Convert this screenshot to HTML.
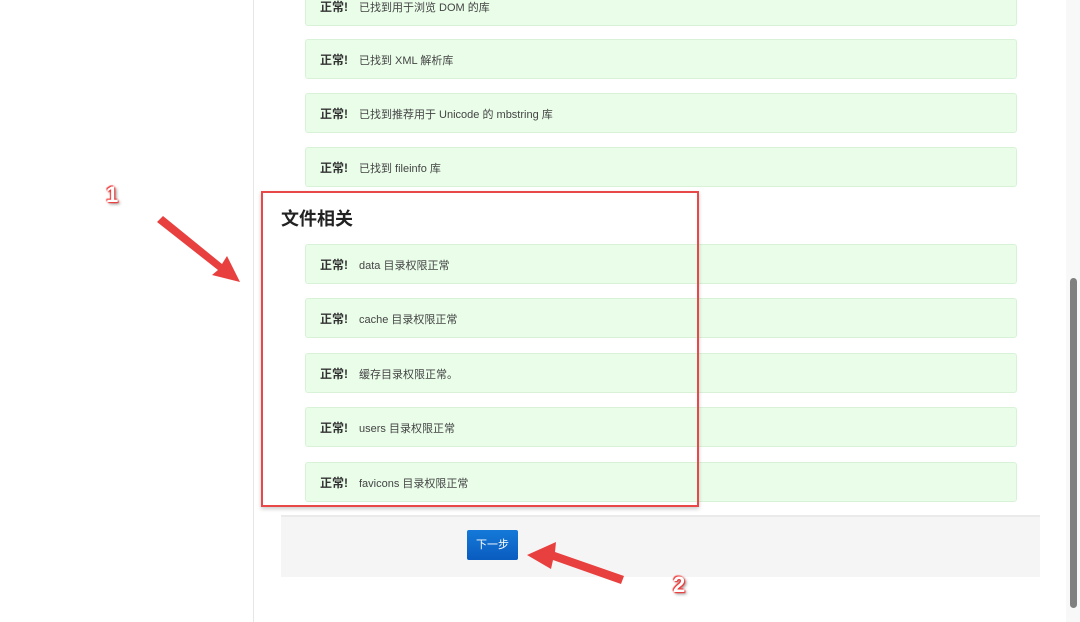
<!DOCTYPE html>
<html><head><meta charset="utf-8"><style>
body{margin:0;width:1080px;height:622px;background:#fff;position:relative;overflow:hidden;font-family:"Liberation Sans","Noto Sans CJK SC",sans-serif;}
.side{position:absolute;left:0;top:0;width:253px;height:622px;border-right:1px solid #e6e6e6;background:#fff}
.a{position:absolute;left:305px;width:712px;height:40px;background:#e9fde9;border:1px solid #d8f2d8;border-radius:3px;font-size:11px;color:#444;line-height:40px;box-sizing:border-box;padding-left:14px}
.a b{color:#333;font-size:12px;margin-right:11px}
h3{position:absolute;left:281px;top:205px;margin:0;font-size:18px;font-weight:bold;color:#222}
.foot{position:absolute;left:281px;top:515px;width:759px;height:60px;background:#f5f5f6;border-top:2px solid #eaeaea}
.btn{position:absolute;left:467px;top:530px;width:51px;height:30px;background:linear-gradient(#1479d8,#0a5cbf);border-radius:2px;color:#fff;font-size:11px;text-align:center;line-height:30px}
.red{position:absolute;left:261px;top:191px;width:434px;height:312px;border:2px solid #e84848;box-shadow:0 2px 4px rgba(0,0,0,.2)}
.sb{position:absolute;left:1066px;top:0;width:14px;height:622px;background:#f8f8f8}
.th{position:absolute;left:1070px;top:278px;width:7px;height:330px;background:#808080;border-radius:4px}
.n{position:absolute;font-size:22px;color:#fff;font-weight:bold;text-shadow:0 0 2px #e33,1px 1px 1px #e33,-1px -1px 1px #e33,2px 2px 3px #888}
</style></head><body>
<div class="side"></div>
<div class="a" style="top:-14px"><b>正常!</b>已找到用于浏览 DOM 的库</div>
<div class="a" style="top:39px"><b>正常!</b>已找到 XML 解析库</div>
<div class="a" style="top:93px"><b>正常!</b>已找到推荐用于 Unicode 的 mbstring 库</div>
<div class="a" style="top:147px"><b>正常!</b>已找到 fileinfo 库</div>
<h3>文件相关</h3>
<div class="a" style="top:244px"><b>正常!</b>data 目录权限正常</div>
<div class="a" style="top:298px"><b>正常!</b>cache 目录权限正常</div>
<div class="a" style="top:353px"><b>正常!</b>缓存目录权限正常。</div>
<div class="a" style="top:407px"><b>正常!</b>users 目录权限正常</div>
<div class="a" style="top:462px"><b>正常!</b>favicons 目录权限正常</div>
<div class="red"></div>
<div class="foot"></div>
<div class="btn">下一步</div>
<div class="sb"></div><div class="th"></div>
<svg style="position:absolute;left:0;top:0" width="1080" height="622">
<g fill="#e8403f">
<polygon points="157,222 163,216 222,264 227,256 240,282 212,275 218,270"/>
<polygon points="624,576 621,584 553,560 551,569 527,555 556,542 555,552"/>
</g></svg>
<div class="n" style="left:106px;top:182px">1</div>
<div class="n" style="left:673px;top:572px">2</div>
</body></html>
